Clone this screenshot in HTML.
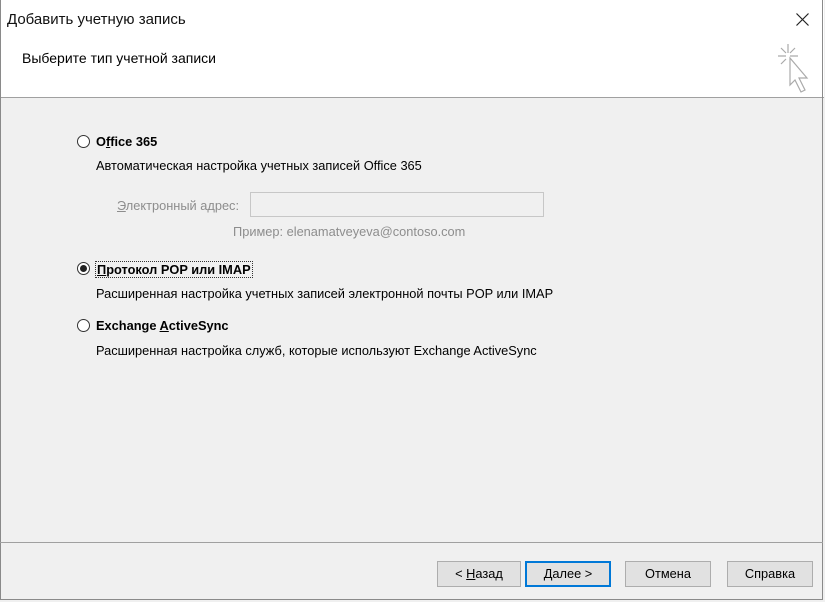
<html><head><style>
body{margin:0;width:825px;height:602px;background:#f0f0f0;font-family:"Liberation Sans",sans-serif;font-size:12.8px;color:#000;position:relative;overflow:hidden}
.a{position:absolute;white-space:nowrap}
.rad{position:absolute;width:13px;height:13px;border:1px solid #333;border-radius:50%;background:#fff;box-sizing:border-box}
.btn{position:absolute;top:561px;height:26px;background:#e1e1e1;border:1px solid #adadad;box-sizing:border-box;text-align:center;line-height:24px;font-size:12.8px}
</style></head><body>
<div class="a" style="left:0;top:0;width:824px;height:97px;background:#fff;border-bottom:1px solid #a0a0a0"></div>
<div class="a" style="left:0;top:0;width:823px;height:600px;border:1px solid #8a8a8a;border-top:none;box-sizing:border-box;pointer-events:none"></div>
<div class="a" style="left:7px;top:11px;font-size:15px;color:#111">Добавить учетную запись</div>
<svg class="a" style="left:796px;top:13px" width="13" height="13"><path d="M0.5 0.5L12.5 12.5M12.5 0.5L0.5 12.5" stroke="#222" stroke-width="1.2"/></svg>
<div class="a" style="left:22px;top:50px;font-size:14px">Выберите тип учетной записи</div>
<svg class="a" style="left:774px;top:42px" width="40" height="54" viewBox="0 0 40 54"><g stroke="#aaa" stroke-width="1.2" fill="none"><path d="M14 2v9M4 14h8M16 14h8M7 6l5 5M21 6l-5 5M7 22l5-5"/><path d="M16 16l0 27 5-5 6 12 4-2-6-12 8 0z" fill="#fff"/></g></svg>
<div class="rad" style="left:77px;top:135px"></div>
<div class="a" style="left:96px;top:134px;font-weight:bold">O<u>f</u>fice 365</div>
<div class="a" style="left:96px;top:158px">Автоматическая настройка учетных записей Office 365</div>
<div class="a" style="left:117px;top:198px;color:#8d8d8d"><u>Э</u>лектронный адрес:</div>
<div class="a" style="left:250px;top:192px;width:294px;height:25px;border:1px solid #c7c7c7;box-sizing:border-box;background:#f0f0f0"></div>
<div class="a" style="left:233px;top:224px;color:#8d8d8d">Пример: elenamatveyeva@contoso.com</div>
<div class="rad" style="left:77px;top:262px"><div style="position:absolute;left:2px;top:2px;width:7px;height:7px;border-radius:50%;background:#222"></div></div>
<div class="a" style="left:95px;top:261px;font-weight:bold;border:1px dotted #333;padding:0 1px"><u>П</u>ротокол POP или IMAP</div>
<div class="a" style="left:96px;top:286px">Расширенная настройка учетных записей электронной почты POP или IMAP</div>
<div class="rad" style="left:77px;top:319px"></div>
<div class="a" style="left:96px;top:318px;font-weight:bold">Exchange <u>A</u>ctiveSync</div>
<div class="a" style="left:96px;top:343px">Расширенная настройка служб, которые используют Exchange ActiveSync</div>
<div class="a" style="left:0;top:542px;width:823px;height:1px;background:#a0a0a0"></div>
<div class="btn" style="left:437px;width:84px">&lt; <u>Н</u>азад</div>
<div class="btn" style="left:525px;width:86px;border:2px solid #0078d7;line-height:22px"><u>Д</u>алее &gt;</div>
<div class="btn" style="left:625px;width:86px">Отмена</div>
<div class="btn" style="left:727px;width:86px">Справка</div>
</body></html>
